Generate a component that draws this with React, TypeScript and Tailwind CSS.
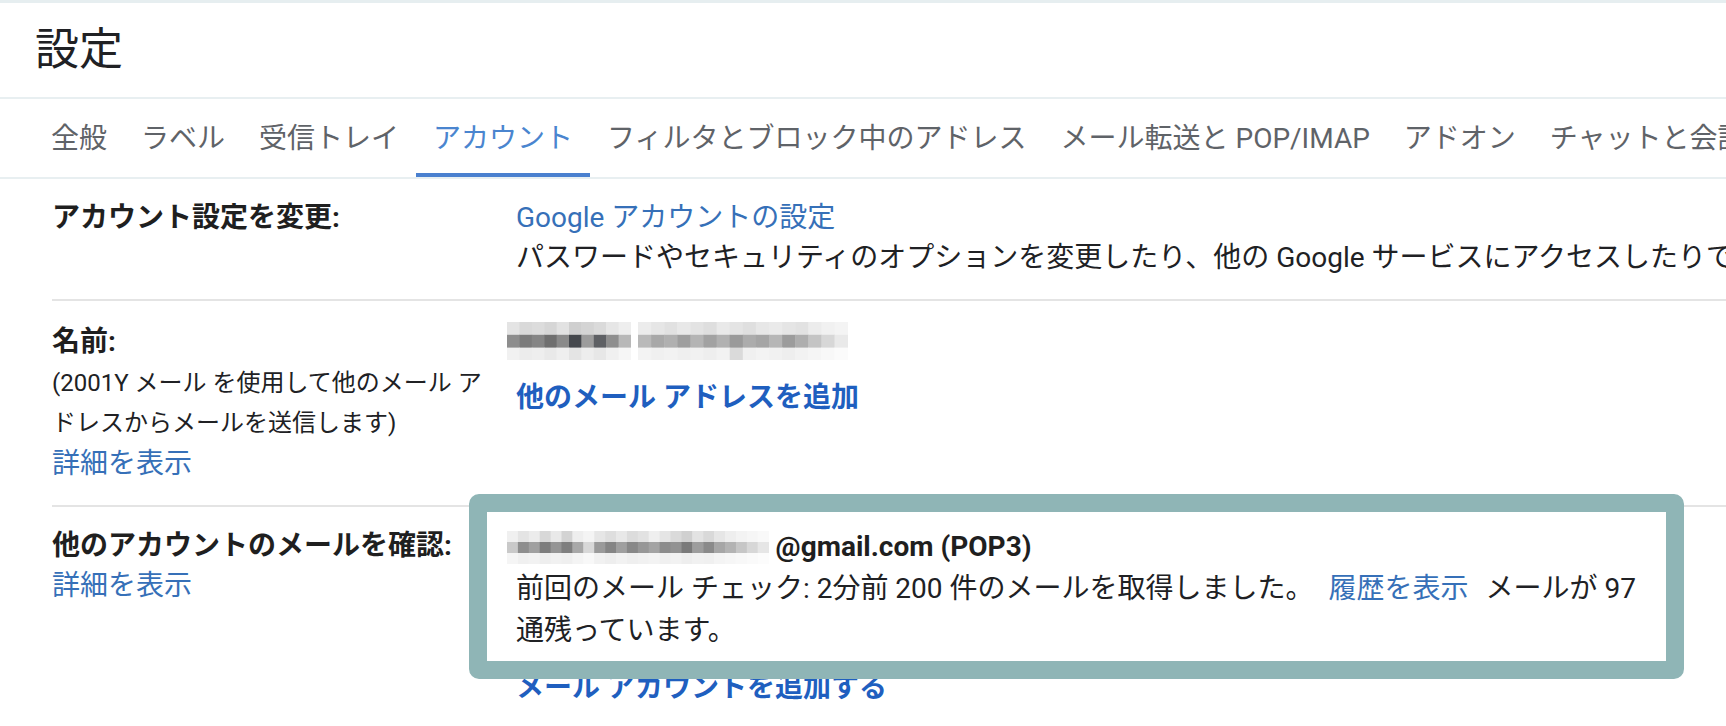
import React from "react";

type MosaicProps = { rows: string[][]; cw: number; ch: number };
function Mosaic({ rows, cw, ch }: MosaicProps) {
  const cols = rows[0].length;
  return (
    <svg width={cols * cw} height={rows.length * ch} className="block shrink-0">
      {rows.map((r, y) =>
        r.map((c, x) => <rect key={`${x}-${y}`} x={x * cw} y={y * ch} width={cw + 0.5} height={ch + 0.5} fill={c} />)
      )}
    </svg>
  );
}

const nameA = [
  ["#e4e4e4", "#d9d9d9", "#dcdcdc", "#d6d6d6", "#e2e2e2", "#cfcfcf", "#d4d4d4", "#dadada", "#e6e6e6", "#eeeeee"],
  ["#8d8d8d", "#7b7b7b", "#858585", "#6f6f6f", "#8a8a8a", "#45484d", "#9c9c9c", "#5e6064", "#8e8e8e", "#b8b8b8"],
  ["#f1f1f1", "#ececec", "#eeeeee", "#e9e9e9", "#efefef", "#e4e4e4", "#ededed", "#e7e7e7", "#f0f0f0", "#f6f6f6"],
];
const nameB = [
  ["#ececec", "#e6e6e6", "#e1e1e1", "#e8e8e8", "#e3e3e3", "#dedede", "#e9e9e9", "#e4e4e4", "#dfdfdf", "#e7e7e7", "#eaeaea", "#e5e5e5", "#e2e2e2", "#ececec", "#f1f1f1", "#f4f4f4"],
  ["#b9b9b9", "#a8a8a8", "#b0b0b0", "#9e9e9e", "#b4b4b4", "#a2a2a2", "#b1b1b1", "#9a9a9a", "#acacac", "#a5a5a5", "#b6b6b6", "#9c9c9c", "#aeaeae", "#c4c4c4", "#d7d7d7", "#e9e9e9"],
  ["#f3f3f3", "#f0f0f0", "#f2f2f2", "#efefef", "#f1f1f1", "#eeeeee", "#f2f2f2", "#dadada", "#f0f0f0", "#f3f3f3", "#f1f1f1", "#eeeeee", "#f2f2f2", "#f5f5f5", "#f8f8f8", "#fbfbfb"],
];
const mail = [
  ["#f0f0f0", "#e4e4e4", "#ececec", "#d8d8d8", "#e9e9e9", "#d3d3d3", "#eeeeee", "#f4f4f4", "#e6e6e6", "#dedede", "#e8e8e8", "#dcdcdc", "#e2e2e2", "#efefef", "#e5e5e5", "#dadada", "#d0d0d0", "#e3e3e3", "#d9d9d9", "#e6e6e6", "#eeeeee", "#f3f3f3", "#f6f6f6", "#f9f9f9"],
  ["#c9c9c9", "#8e8e8e", "#a0a0a0", "#7d7d7d", "#959595", "#7f7f7f", "#a8a8a8", "#d8d8d8", "#9a9a9a", "#858585", "#9f9f9f", "#888888", "#979797", "#a3a3a3", "#8c8c8c", "#929292", "#7a7a7a", "#9d9d9d", "#8a8a8a", "#a6a6a6", "#b3b3b3", "#c6c6c6", "#d7d7d7", "#e6e6e6"],
  ["#f5f5f5", "#f0f0f0", "#f2f2f2", "#eeeeee", "#f1f1f1", "#efefef", "#f4f4f4", "#f8f8f8", "#f1f1f1", "#eeeeee", "#f2f2f2", "#efefef", "#f1f1f1", "#f3f3f3", "#f0f0f0", "#f2f2f2", "#eeeeee", "#f1f1f1", "#f0f0f0", "#f4f4f4", "#f6f6f6", "#f8f8f8", "#fafafa", "#fcfcfc"],
];

const tabs = ["全般", "ラベル", "受信トレイ", "アカウント", "フィルタとブロック中のアドレス", "メール転送と POP/IMAP", "アドオン", "チャットと会話", "詳細", "オフライン", "テーマ"];

export default function App() {
  return (
    <div className="w-[1726px] h-[726px] overflow-hidden bg-white font-['Roboto','Noto_Sans_CJK_JP',sans-serif] text-[#202124]">
      <div className="h-[3px] bg-[#e6eef0]" />
      <div className="h-[94px] flex items-center pl-[35px]">
        <h1 className="text-[44px] leading-[50px] font-normal text-[#202124]">設定</h1>
      </div>
      <div className="h-[2px] bg-[#e8eff1]" />
      <div className="flex h-[78px] pl-[34px] whitespace-nowrap">
        {tabs.map((t) => (
          <div
            key={t}
            className={
              t === "アカウント"
                ? "px-[17px] h-full flex items-center text-[28px] text-[#4a85cf] border-b-[4px] border-[#4a80cf] pt-[5px]"
                : "px-[17px] h-full flex items-center text-[28px] text-[#5f6368] pt-[1px]"
            }
          >
            {t}
          </div>
        ))}
      </div>
      <div className="h-[2px] bg-[#e8eff1]" />

      <div className="pl-[52px]">
        {/* Row 1 */}
        <div className="flex pt-[19px] pb-[21px]">
          <div className="w-[464px] shrink-0 text-[28px] leading-[40px] font-bold text-[#1f1f1f]">アカウント設定を変更:</div>
          <div className="whitespace-nowrap text-[28px] leading-[40px]">
            <div className="text-[#3670b8]">Google アカウントの設定</div>
            <div>パスワードやセキュリティのオプションを変更したり、他の Google サービスにアクセスしたりできます。</div>
          </div>
        </div>
        <div className="h-[2px] bg-[#e4e4e4]" />

        {/* Row 2 */}
        <div className="flex pt-[20px] pb-[20px]">
          <div className="w-[464px] shrink-0">
            <div className="text-[28px] leading-[42px] font-bold text-[#1f1f1f]">名前:</div>
            <div className="text-[24px] leading-[40px] whitespace-nowrap">
              (2001Y メール を使用して他のメール ア
              <br />
              ドレスからメールを送信します)
            </div>
            <div className="text-[28px] leading-[42px] text-[#3670b8]">詳細を表示</div>
          </div>
          <div className="whitespace-nowrap">
            <div className="flex gap-[7px] pt-[1px] -ml-[9px]">
              <Mosaic rows={nameA} cw={12.4} ch={12.8} />
              <Mosaic rows={nameB} cw={13.1} ch={12.8} />
            </div>
            <div className="mt-[18px] text-[28px] leading-[40px] font-bold text-[#1f5fbf]">他のメール アドレスを追加</div>
          </div>
        </div>
        <div className="h-[2px] bg-[#e4e4e4]" />

        {/* Row 3 */}
        <div className="flex pt-[19px] pb-[20px]">
          <div className="w-[464px] shrink-0">
            <div className="text-[28px] leading-[40px] font-bold text-[#1f1f1f]">他のアカウントのメールを確認:</div>
            <div className="text-[28px] leading-[40px] text-[#3670b8]">詳細を表示</div>
          </div>
          <div className="relative whitespace-nowrap text-[28px]">
            <div className="flex items-center h-[42px]">
              <div className="-ml-[9px] mr-[7px]">
                <Mosaic rows={mail} cw={10.9} ch={11} />
              </div>
              <span className="font-bold text-[#1f1f1f]">@gmail.com (POP3)</span>
            </div>
            <div className="leading-[42px]">
              前回のメール チェック: 2分前 200 件のメールを取得しました。<span className="ml-[15px] mr-[10px] text-[#3670b8]">履歴を表示</span> メールが 97
              <br />
              通残っています。
            </div>
            <div className="mt-[16px] leading-[40px] font-bold text-[#1f5fbf]">メール アカウントを追加する</div>
            <div className="absolute left-[-47px] top-[-32px] w-[1215px] h-[185px] rounded-[10px] border-[18px] border-[#8fb5b6]" />
          </div>
        </div>
      </div>
    </div>
  );
}
